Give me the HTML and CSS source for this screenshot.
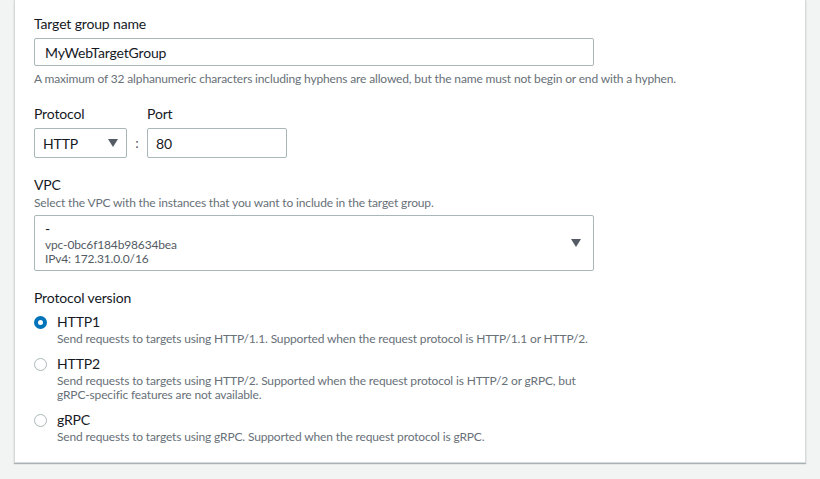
FILE: index.html
```html
<!DOCTYPE html>
<html lang="en">
<head>
    <meta charset="UTF-8">
    <title>Create target group</title>
    <link rel="stylesheet" href="styles.css">
</head>
<body>
    <div class="panel">
        <!-- name -->
        <div class="field">
            <label class="field-label">Target group name</label>
            <input type="text" class="text-input wide" value="MyWebTargetGroup">
            <div class="hint hint-below">A maximum of 32 alphanumeric characters including hyphens are allowed, but the name must not begin or end with a hyphen.</div>
        </div>

        <!-- protocol : port -->
        <div class="field proto-row">
            <div class="proto-col">
                <label class="field-label">Protocol</label>
                <div class="select small">
                    <span>HTTP</span>
                    <span class="caret"></span>
                </div>
            </div>
            <div class="colon">:</div>
            <div class="port-col">
                <label class="field-label">Port</label>
                <input type="text" class="text-input port" value="80">
            </div>
        </div>

        <!-- vpc -->
        <div class="field">
            <label class="field-label no-gap">VPC</label>
            <div class="hint">Select the VPC with the instances that you want to include in the target group.</div>
            <div class="select wide vpc-select">
                <div class="vpc-lines">
                    <div class="vpc-name">-</div>
                    <div class="vpc-meta">vpc-0bc6f184b98634bea</div>
                    <div class="vpc-meta">IPv4: 172.31.0.0/16</div>
                </div>
                <span class="caret"></span>
            </div>
        </div>

        <!-- protocol version -->
        <div class="field">
            <label class="field-label">Protocol version</label>
            <div class="radio-group">
                <div class="radio-option">
                    <span class="radio checked"></span>
                    <div>
                        <div class="radio-title">HTTP1</div>
                        <div class="radio-desc">Send requests to targets using HTTP/1.1. Supported when the request protocol is HTTP/1.1 or HTTP/2.</div>
                    </div>
                </div>
                <div class="radio-option">
                    <span class="radio"></span>
                    <div>
                        <div class="radio-title">HTTP2</div>
                        <div class="radio-desc">Send requests to targets using HTTP/2. Supported when the request protocol is HTTP/2 or gRPC, but<br>gRPC-specific features are not available.</div>
                    </div>
                </div>
                <div class="radio-option">
                    <span class="radio"></span>
                    <div>
                        <div class="radio-title">gRPC</div>
                        <div class="radio-desc">Send requests to targets using gRPC. Supported when the request protocol is gRPC.</div>
                    </div>
                </div>
            </div>
        </div>
    </div>
</body>
</html>
```

FILE: styles.css
```css
body {
    margin: 0;
    padding: 0 14px 16px 14px;
    background: #f2f3f3;
    font-family: Lato, Arial, sans-serif;
    letter-spacing: -0.15px;
    color: #16191f;
}

.panel {
    background: #fff;
    border: 1px solid #d5dbdb;
    border-top: none;
    box-shadow: 0 1px 1px 0 rgba(0, 28, 36, 0.3);
    padding: 14px 19px 18px 19px;
}

.field {
    margin-bottom: 17px;
}

.field:last-child {
    margin-bottom: 0;
}

.field-label {
    display: block;
    font-size: 14px;
    line-height: 20px;
    margin-bottom: 4px;
}

.field-label.no-gap {
    margin-bottom: 0;
}

.hint {
    font-size: 12px;
    line-height: 16px;
    color: #687078;
}

.hint-below {
    margin-top: 5px;
}

.text-input {
    box-sizing: border-box;
    height: 28px;
    border: 1px solid #aab7b8;
    border-radius: 2px;
    padding: 0 10px;
    font-family: inherit;
    letter-spacing: inherit;
    font-size: 14px;
    color: #16191f;
    display: block;
}

.wide {
    width: 560px;
}

/* protocol row */
.proto-row {
    display: flex;
    align-items: flex-end;
}

.select {
    box-sizing: border-box;
    border: 1px solid #aab7b8;
    border-radius: 2px;
    display: flex;
    align-items: center;
    justify-content: space-between;
    font-size: 14px;
}

.select.small {
    width: 93px;
    height: 30px;
    padding: 0 8px;
}

.caret {
    width: 0;
    height: 0;
    border-left: 5.5px solid transparent;
    border-right: 5.5px solid transparent;
    border-top: 8px solid #545b64;
}

.colon {
    width: 20px;
    text-align: center;
    font-size: 14px;
    line-height: 30px;
    color: #545b64;
}

.text-input.port {
    width: 140px;
    height: 30px;
    padding: 0 8px;
}

/* vpc */
.vpc-select {
    height: 56px;
    margin-top: 4px;
    padding: 0 12px 0 10px;
}

.vpc-name {
    font-size: 14px;
    line-height: 18px;
}

.vpc-meta {
    font-size: 12px;
    line-height: 14px;
    color: #545b64;
}

/* radios */
.radio-group {
    display: flex;
    flex-direction: column;
    gap: 8px;
}

.radio-option {
    display: flex;
    align-items: flex-start;
}

.radio {
    box-sizing: border-box;
    width: 13px;
    height: 13px;
    border-radius: 50%;
    border: 1.5px solid #aab7b8;
    margin: 4px 10px 0 0;
    flex-shrink: 0;
}

.radio.checked {
    border: 4px solid #0073bb;
}

.radio-title {
    font-size: 14px;
    line-height: 20px;
}

.radio-desc {
    font-size: 12px;
    line-height: 14px;
    color: #687078;
}
```
